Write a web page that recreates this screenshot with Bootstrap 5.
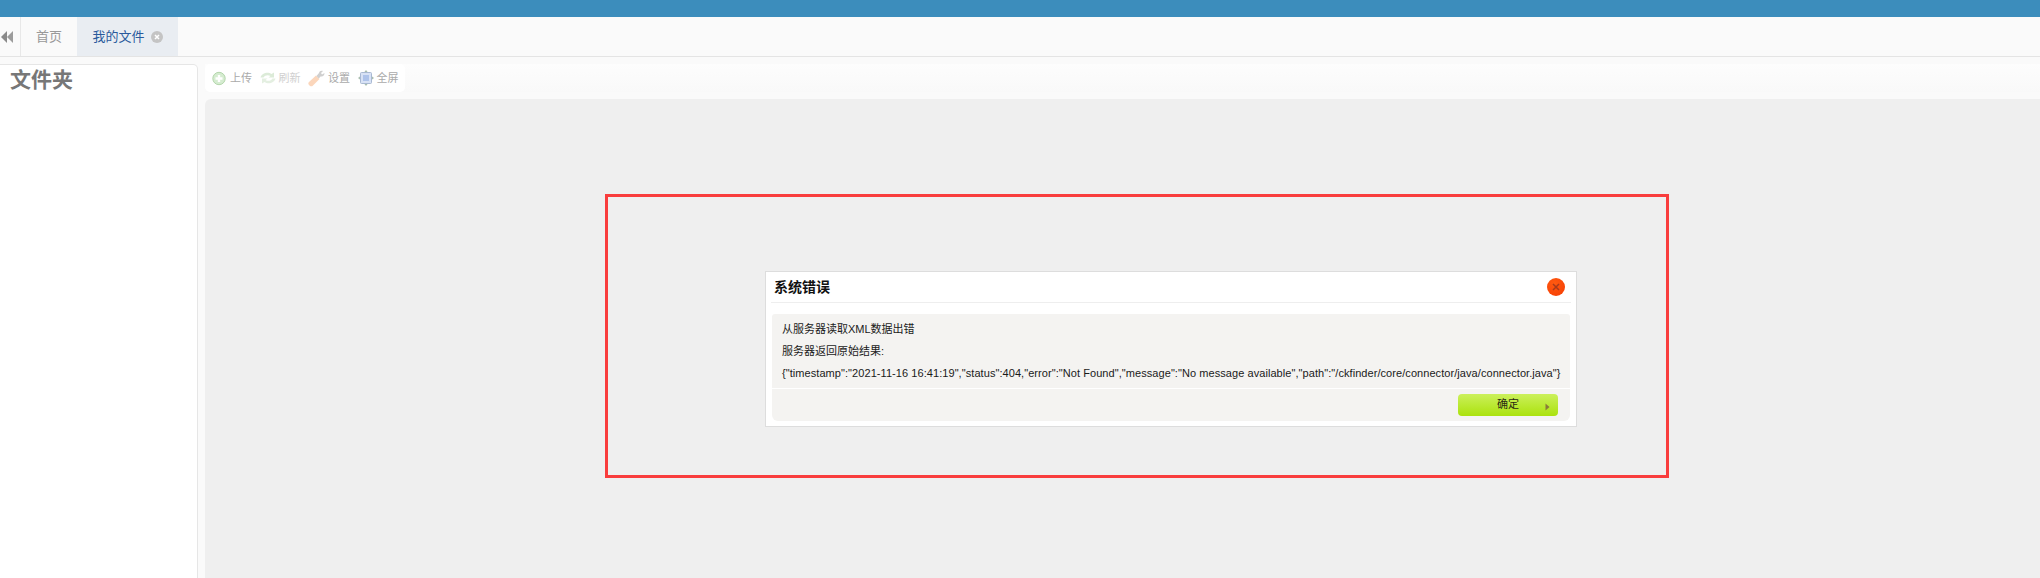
<!DOCTYPE html>
<html lang="zh">
<head>
<meta charset="utf-8">
<title>我的文件</title>
<link href="https://cdn.jsdelivr.net/npm/bootstrap@5.3.0/dist/css/bootstrap.min.css" rel="stylesheet">
<style>
html,body{height:100%;overflow:hidden}
body{font-family:"Liberation Sans","Noto Sans CJK SC",sans-serif;background:#fafafa;position:relative;font-size:11px;color:#222}
.topstrip{height:17px;background:#3c8dbc}
.tabstrip{height:40px;background:#fafafa;border-bottom:1px solid #e4e4e4}
.tabback{width:21px;border-right:1px solid #e8e8e8;padding-left:1px}
.tabitem{font-size:13px;color:#999;height:39px}
.tabhome{width:56px}
.tabfile{width:101px;background:#e9edf2;color:#2a5a9c;gap:6px}
.tabx{width:12px;height:12px;border-radius:50%;background:#c4c4c4}
.mainrow{height:522px;padding-top:7px}
.foldpane{width:198px;background:#fff;border:1px solid #e6e6e6;border-left:0;border-top-right-radius:5px;font-size:21px;font-weight:700;color:#777;line-height:28px;padding:1px 0 0 10px}
.workpane{margin-left:7px}
.toolband{height:28px;background:linear-gradient(#fdfdfd,#f9f9f9)}
.toolpill{width:200px;height:28px;background:#fff;border-radius:5px;padding-left:7px;gap:7.5px;color:#aaa;font-size:11px}
.toolitem{gap:3px}
.toolfaint{color:#d0d0d0}
.graypanel{margin-top:7px;background:#efefef;border-top-left-radius:6px;padding:172px 0 0 560px;height:479px}
.errbox{width:812px;height:156px;background:#fff;border:1px solid #ddd;padding:0 5px}
.errhead{height:31px;border-bottom:1px solid #eee;padding:0 6px 0 3px;font-size:14px;font-weight:700;color:#111}
.errclose{width:18px;height:18px;border-radius:50%;background:radial-gradient(circle at 40% 30%,#ff5a10,#f53c04)}
.errbody{margin-top:11px;background:#f4f3f1;border-radius:3px 3px 6px 6px;height:107px;margin-left:1px;margin-right:1px;color:#1a1a1a}
.errtext{height:75px;padding:4px 0 0 10px;line-height:22px;border-bottom:1px solid #fff;white-space:nowrap}
.errraw{letter-spacing:.065px}
.errfoot{height:31px;padding:5px 12px 0 0}
.okbtn{width:100px;height:22px;border-radius:4px;background:linear-gradient(#cbf05b,#abe20d);font-size:11px;line-height:20px;color:#2a2a12;border:0;padding:0 0 2px}
.okarrow{right:8px;top:9px}
.redframe{left:605px;top:194px;width:1064px;height:284px;border:3px solid #f93d3d;pointer-events:none}
</style>
</head>
<body>
<div class="topstrip"></div>
<div class="tabstrip d-flex">
  <div class="tabback d-flex align-items-center">
    <svg width="12" height="12" viewBox="0 0 12 12"><path d="M6 0V12L0 6Z" fill="#8a8a8a"/><path d="M12 0V12L6 6Z" fill="#9c9c9c"/></svg>
  </div>
  <div class="tabitem tabhome d-flex align-items-center justify-content-center">首页</div>
  <div class="tabitem tabfile d-flex align-items-center justify-content-center">我的文件
    <span class="tabx d-flex align-items-center justify-content-center">
      <svg width="6" height="6" viewBox="0 0 6 6"><path d="M1 1L5 5M5 1L1 5" stroke="#fff" stroke-width="1.500"/></svg>
    </span>
  </div>
</div>
<div class="mainrow d-flex">
  <div class="foldpane flex-shrink-0">文件夹</div>
  <div class="workpane flex-grow-1">
    <div class="toolband">
    <div class="toolpill d-flex align-items-center">
      <span class="toolitem d-flex align-items-center">
        <svg width="15" height="15" viewBox="0 0 15 15"><circle cx="7" cy="7.500" r="6.200" fill="#d5ecd0" stroke="#b4d6ac"/><path d="M7 4V11M3.500 7.500H10.500" stroke="#fff" stroke-width="2.400"/></svg>上传</span>
      <span class="toolitem toolfaint d-flex align-items-center">
        <svg width="16" height="14" viewBox="0 0 16 14"><path d="M0.500 6.500C1.500 2 8 0.500 11.500 3L14 1.500V6.500H8.500L10.500 5C8 3.500 5 4 3.500 6.500Z" fill="#dcebd8"/><path d="M15.500 7.500C14.500 12 8 13.500 4.500 11L2 12.500V7.500H7.500L5.500 9C8 10.500 11 10 12.500 7.500Z" fill="#e4efe1"/></svg>刷新</span>
      <span class="toolitem d-flex align-items-center">
        <svg width="17" height="17" viewBox="0 0 17 17"><path d="M1.500 15.500C0 14 0 13 1 12L8 5.500L11.500 9L5 15.500C4 16.500 3 16.800 1.500 15.500Z" fill="#fbd6bb"/><path d="M8.500 6L11 3C11.500 1 13 0.500 15 1L13 3L14 4.500L16.500 3C16.500 5.500 15 7 12.500 6.500L10.800 8.500Z" fill="#cfcfcf"/></svg>设置</span>
      <span class="toolitem d-flex align-items-center">
        <svg width="16" height="16" viewBox="0 0 16 16"><path d="M8 0L10 2.500H6ZM8 16L6 13.500H10ZM0 8L2.500 6V10ZM16 8L13.500 10V6Z" fill="#a9bdae"/><rect x="2.500" y="2.500" width="11" height="11" rx="1" fill="#d8e2f5" stroke="#a9b9d2"/><rect x="5" y="5" width="6" height="6" fill="#aec3ea"/></svg>全屏</span>
    </div>
    </div>
    <div class="graypanel">
      <div class="errbox">
        <div class="errhead d-flex align-items-center justify-content-between">
          <span>系统错误</span>
          <span class="errclose d-flex align-items-center justify-content-center">
            <svg width="8" height="8" viewBox="0 0 8 8"><path d="M1 1L7 7M7 1L1 7" stroke="#a8391a" stroke-width="1.500"/></svg>
          </span>
        </div>
        <div class="errbody">
          <div class="errtext">从服务器读取XML数据出错<br>服务器返回原始结果:<br><span class="errraw">{"timestamp":"2021-11-16 16:41:19","status":404,"error":"Not Found","message":"No message available","path":"/ckfinder/core/connector/java/connector.java"}</span></div>
          <div class="errfoot d-flex justify-content-end">
            <button type="button" class="okbtn btn position-relative">确定
              <svg class="okarrow position-absolute" width="5" height="8" viewBox="0 0 5 8"><path d="M0.500 0.500L4.500 4L0.500 7.500Z" fill="#8a7a3a"/></svg>
            </button>
          </div>
        </div>
      </div>
    </div>
  </div>
</div>
<div class="redframe position-absolute"></div>
<script src="https://cdn.jsdelivr.net/npm/bootstrap@5.3.0/dist/js/bootstrap.bundle.min.js"></script>
</body>
</html>
